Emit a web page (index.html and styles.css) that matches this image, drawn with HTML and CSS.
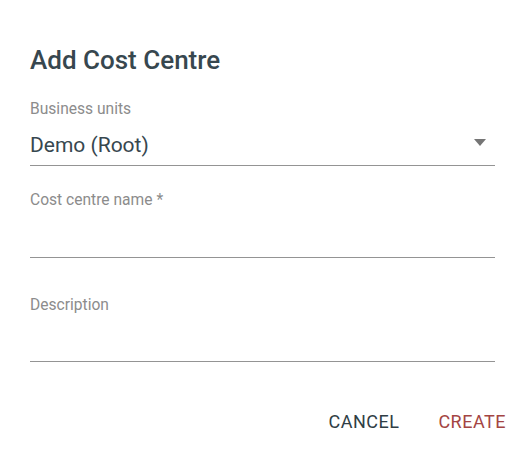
FILE: index.html
```html
<!DOCTYPE html>
<html>
<head>
<meta charset="utf-8">
<link rel="stylesheet" href="styles.css">
</head>
<body>
<div class="dialog">
  <h2 class="title">Add Cost Centre</h2>
  <div class="field field-select">
    <div class="label">Business units</div>
    <div class="control">
      <span class="value">Demo (Root)</span>
      <svg class="arrow" width="12" height="7" viewBox="0 0 12 7"><path d="M0 0h12L6 7z" fill="#757575"/></svg>
    </div>
  </div>
  <div class="field field-name">
    <div class="label">Cost centre name *</div>
    <div class="control"></div>
  </div>
  <div class="field field-desc">
    <div class="label">Description</div>
    <div class="control"></div>
  </div>
  <div class="actions">
    <button class="btn btn-cancel">Cancel</button>
    <button class="btn btn-create">Create</button>
  </div>
</div>
</body>
</html>
```
FILE: styles.css
```css
html, body {
  margin: 0;
  padding: 0;
  background: #fff;
}
body {
  font-family: Roboto, "Liberation Sans", sans-serif;
  width: 524px;
  height: 461px;
  overflow: hidden;
}
.dialog {
  padding: 44px 29px 0 30px;
  display: flex;
  flex-direction: column;
}
.title {
  margin: 0;
  font-size: 26px;
  line-height: 32px;
  font-weight: 500;
  color: #37474f;
}
.field {
  display: flex;
  flex-direction: column;
}
.label {
  font-size: 15.6px;
  line-height: 18px;
  color: #8c8c8c;
}
.control {
  display: flex;
  align-items: flex-start;
  justify-content: space-between;
  border-bottom: 1px solid #949494;
}
.field-select {
  margin-top: 24px;
}
.field-select .control {
  padding: 15px 0 8px;
}
.value {
  font-size: 21px;
  line-height: 24px;
  color: #37474f;
}
.arrow {
  margin-top: 6px;
  margin-right: 9px;
}
.field-name {
  margin-top: 25px;
}
.field-name .control {
  height: 48px;
}
.field-desc {
  margin-top: 38px;
}
.field-desc .control {
  height: 47px;
}
.actions {
  display: flex;
  justify-content: flex-end;
  gap: 39px;
  margin-top: 50px;
  margin-right: -11px;
}
.btn {
  border: 0;
  background: none;
  padding: 0;
  font-family: Roboto, "Liberation Sans", sans-serif;
  font-size: 18px;
  font-weight: 400;
  letter-spacing: 0.5px;
  text-transform: uppercase;
  line-height: 20px;
}
.btn-cancel {
  color: #2f3e45;
}
.btn-create {
  color: #a44543;
}
```
